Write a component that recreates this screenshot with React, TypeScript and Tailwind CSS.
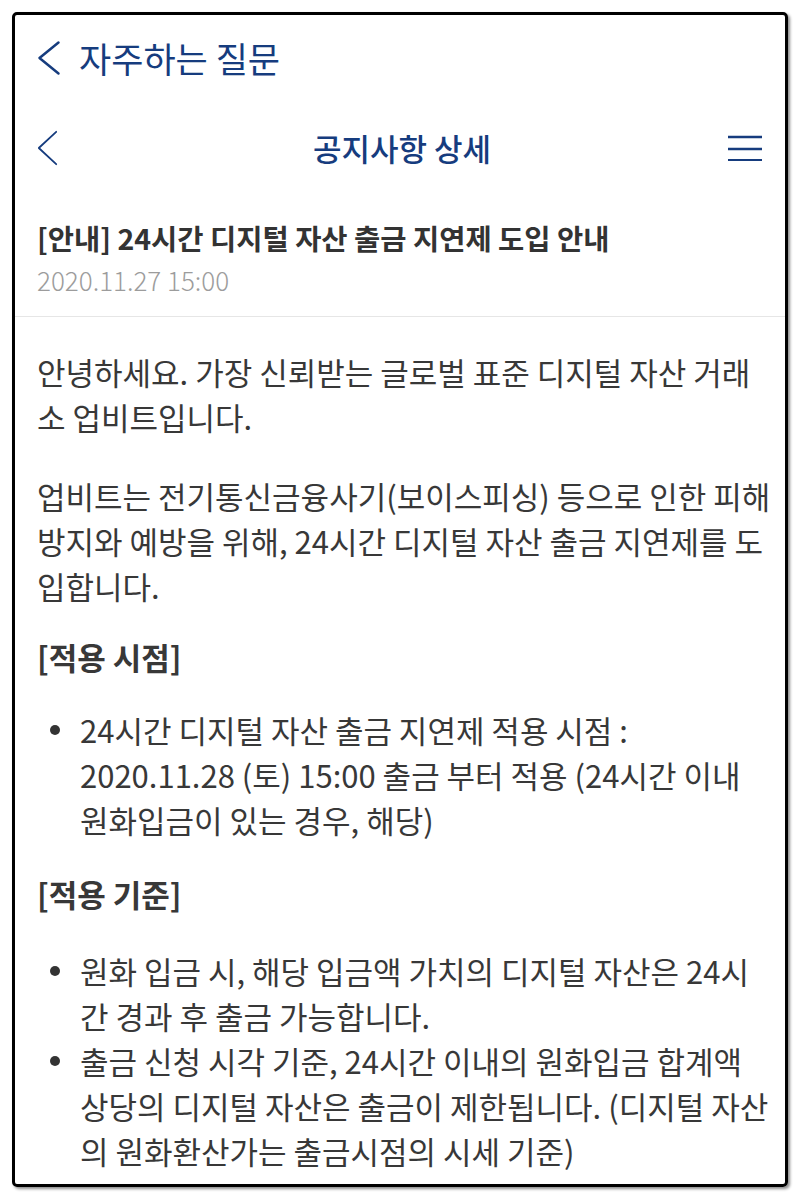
import React from "react";

const NAVY = "text-[#163c7e]";

const ChevronLeft = ({ w, h, stroke }: { w: number; h: number; stroke: number }) => (
  <svg width={w} height={h} viewBox={`0 0 ${w} ${h}`} fill="none">
    <polyline
      points={`${w - stroke},${stroke} ${stroke},${h / 2} ${w - stroke},${h - stroke}`}
      stroke="#163c7e"
      strokeWidth={stroke}
      strokeLinecap="round"
      strokeLinejoin="round"
    />
  </svg>
);

const Bullet = ({ children }: { children: React.ReactNode }) => (
  <li className="flex">
    <span className="w-[43px] shrink-0 flex pl-[13px]">
      <span className="mt-[18px] w-[10px] h-[10px] rounded-full bg-[#333]" />
    </span>
    <span className="whitespace-nowrap">{children}</span>
  </li>
);

export default function App() {
  return (
    <div
      className="bg-white p-3 w-[800px] h-[1196px]"
      style={{ fontFamily: '"Noto Sans CJK KR", "Noto Sans", sans-serif' }}
    >
      <div className="h-[1175px] border-[3px] border-black rounded-[5px] overflow-hidden shadow-[2px_2px_3px_rgba(0,0,0,0.45)] flex flex-col">
        {/* app bar */}
        <div className={`h-[85px] flex items-center pl-[22px] ${NAVY}`}>
          <ChevronLeft w={24} h={36} stroke={2.5} />
          <span className="ml-[18px] text-[35px] leading-none">자주하는 질문</span>
        </div>

        {/* page header */}
        <div className={`h-[95px] flex items-center justify-between px-[22px] ${NAVY}`}>
          <div className="w-[40px]">
            <ChevronLeft w={21} h={36} stroke={1.8} />
          </div>
          <span className="text-[31px] font-medium leading-none">공지사항 상세</span>
          <svg width="36" height="30" viewBox="0 0 36 30">
            <line x1="1" y1="4" x2="35" y2="4" stroke="#163c7e" strokeWidth="2.6" />
            <line x1="1" y1="16" x2="35" y2="16" stroke="#163c7e" strokeWidth="2.4" />
            <line x1="1" y1="27" x2="35" y2="27" stroke="#163c7e" strokeWidth="2" />
          </svg>
        </div>

        {/* title */}
        <div className="px-[22px] pt-[23px] pb-[16px] border-b border-[#e6e6e6]">
          <h1 className="text-[28.5px] font-bold text-[#333] leading-[40px] whitespace-nowrap">
            [안내] 24시간 디지털 자산 출금 지연제 도입 안내
          </h1>
          <p className="text-[26px] font-light text-[#9c9c9c] leading-[40px] mt-[2px]">2020.11.27 15:00</p>
        </div>

        {/* body */}
        <div className="px-[22px] pt-[32px] text-[31px] leading-[45px] text-[#383838] flex flex-col gap-[29px]">
          <p className="whitespace-nowrap">
            안녕하세요. 가장 신뢰받는 글로벌 표준 디지털 자산 거래
            <br />소 업비트입니다.
          </p>
          <p className="whitespace-nowrap mt-[5px]">
            업비트는 전기통신금융사기(보이스피싱) 등으로 인한 피해
            <br />방지와 예방을 위해, 24시간 디지털 자산 출금 지연제를 도
            <br />입합니다.
          </p>
          <h2 className="font-bold -mt-[3px]">[적용 시점]</h2>
          <ul className="-mt-[1px]">
            <Bullet>
              24시간 디지털 자산 출금 지연제 적용 시점 :
              <br />2020.11.28 (토) 15:00 출금 부터 적용 (24시간 이내
              <br />원화입금이 있는 경우, 해당)
            </Bullet>
          </ul>
          <h2 className="font-bold">[적용 기준]</h2>
          <ul className="mt-[3px]">
            <Bullet>
              원화 입금 시, 해당 입금액 가치의 디지털 자산은 24시
              <br />간 경과 후 출금 가능합니다.
            </Bullet>
            <Bullet>
              출금 신청 시각 기준, 24시간 이내의 원화입금 합계액
              <br />상당의 디지털 자산은 출금이 제한됩니다. (디지털 자산
              <br />의 원화환산가는 출금시점의 시세 기준)
            </Bullet>
          </ul>
        </div>
      </div>
    </div>
  );
}
